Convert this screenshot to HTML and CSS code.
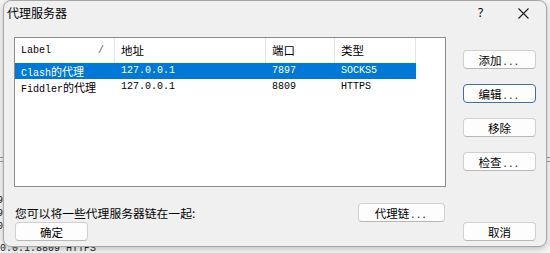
FILE: index.html
```html
<!DOCTYPE html>
<html lang="zh-CN">
<head>
    <meta charset="UTF-8">
    <meta name="viewport" content="width=device-width, initial-scale=1.0">
    <title>代理服务器</title>
    <link rel="stylesheet" href="styles.css">
</head>
<body>
    <div class="desktop">
        <!-- the window behind the dialog, only its edges show -->
        <div class="behind-rule"></div>
        <div class="behind-left">9<br>9<br>0</div>
        <div class="behind-bottom">0.0.1.8809 HTTPS</div>

        <div class="dialog">
            <div class="titlebar">
                <span class="title">代理服务器</span>
                <span class="tb-help">?</span>
                <span class="tb-close">
                    <svg width="11" height="11" viewBox="0 0 11 11">
                        <path d="M0.5 0.5 L10.5 10.5 M10.5 0.5 L0.5 10.5" stroke="#1b1b1b" stroke-width="1.1" fill="none"/>
                    </svg>
                </span>
            </div>

            <div class="dialog-body">
                <div class="listview">
                    <div class="lv-header">
                        <div class="lv-col lv-col-label"><span>Label</span><span class="sort">/</span></div>
                        <div class="lv-col">地址</div>
                        <div class="lv-col">端口</div>
                        <div class="lv-col">类型</div>
                    </div>
                    <div class="lv-row selected">
                        <div class="lv-cell">Clash<span class="cjk">的代理</span></div>
                        <div class="lv-cell">127.0.0.1</div>
                        <div class="lv-cell">7897</div>
                        <div class="lv-cell">SOCKS5</div>
                    </div>
                    <div class="lv-row">
                        <div class="lv-cell">Fiddler<span class="cjk">的代理</span></div>
                        <div class="lv-cell">127.0.0.1</div>
                        <div class="lv-cell">8809</div>
                        <div class="lv-cell">HTTPS</div>
                    </div>
                </div>

                <div class="side-buttons">
                    <button class="btn">添加<span class="dots">...</span></button>
                    <button class="btn btn-default">编辑<span class="dots">...</span></button>
                    <button class="btn">移除</button>
                    <button class="btn">检查<span class="dots">...</span></button>
                </div>

                <div class="chain-row">
                    <span class="hint">您可以将一些代理服务器链在一起:</span>
                    <button class="btn btn-chain">代理链<span class="dots">...</span></button>
                </div>

                <div class="footer">
                    <button class="btn btn-ok">确定</button>
                    <button class="btn">取消</button>
                </div>
            </div>
        </div>
    </div>
</body>
</html>
```

FILE: styles.css
```css
body {
    margin: 0;
    background: #f0f0f0;
    font-family: "Noto Sans CJK SC", "Noto Sans", sans-serif;
    overflow: hidden;
}
.desktop {
    position: relative;
    width: 550px;
    height: 253px;
    background: #f4f4f4;
    overflow: hidden;
}

/* behind window */
.behind-rule {
    position: absolute;
    left: 0;
    top: 157px;
    width: 550px;
    height: 3px;
    border-top: 1px solid #9a9a9a;
    border-bottom: 1px solid #9a9a9a;
}
.behind-left {
    position: absolute;
    left: -3px;
    top: 194px;
    font-family: "Liberation Mono", monospace;
    font-size: 10px;
    line-height: 13px;
    color: #222;
}
.behind-bottom {
    position: absolute;
    left: 0;
    top: 243px;
    font-family: "Liberation Mono", monospace;
    font-size: 10px;
    line-height: 12px;
    color: #222;
}

/* dialog */
.dialog {
    position: absolute;
    left: 3px;
    top: 0;
    width: 544px;
    height: 247px;
    box-sizing: border-box;
    background: #f0f0f0;
    border: 1px solid #a6a6a6;
    border-radius: 8px;
    box-shadow: 0 2px 6px rgba(0,0,0,0.22);
    display: flex;
    flex-direction: column;
}
.titlebar {
    height: 28px;
    display: flex;
    align-items: flex-start;
    padding: 3px 0 0 3px;
    box-sizing: border-box;
    font-size: 12px;
    line-height: 18px;
    color: #000;
}
.tb-help {
    margin-left: auto;
    width: 8px;
    font-family: "Noto Sans", sans-serif;
    font-size: 12px;
}
.tb-close {
    margin: 4px 17px 0 32px;
    display: flex;
}

.dialog-body {
    display: grid;
    grid-template-columns: 432px 73px;
    column-gap: 17px;
    padding: 8px 10px 0 10px;
}

/* list view */
.listview {
    height: 150px;
    box-sizing: border-box;
    background: #fff;
    border: 1px solid #8c8c8c;
}
.lv-header, .lv-row {
    display: grid;
    grid-template-columns: 100px 151px 69px 81px;
    width: 401px;
}
.lv-header {
    height: 25px;
}
.lv-col {
    padding-left: 6px;
    border-right: 1px solid #e5e5e5;
    font-size: 11.5px;
    line-height: 25px;
    color: #000;
}
.lv-col-label {
    display: flex;
    justify-content: space-between;
    padding-right: 10px;
    font-family: "Liberation Mono", monospace;
    font-size: 10px;
}
.sort {
    color: #555;
}
.lv-row {
    height: 16px;
    font-family: "Liberation Mono", "Noto Sans CJK SC", monospace;
    font-size: 10px;
    line-height: 16px;
    color: #000;
}
.lv-row.selected {
    background: #0078d7;
    color: #fff;
}
.lv-cell {
    padding-left: 6px;
    white-space: nowrap;
}
.cjk {
    font-family: "Noto Sans CJK SC", sans-serif;
    font-size: 11px;
}

/* buttons */
.btn {
    height: 19px;
    padding: 0;
    box-sizing: border-box;
    background: #fdfdfd;
    border: 1px solid #d0d0d0;
    border-bottom-color: #b8b8b8;
    border-radius: 4px;
    font-family: "Noto Sans CJK SC", sans-serif;
    font-size: 11.5px;
    line-height: 16px;
    color: #000;
    width: 73px;
}
.dots {
    letter-spacing: 2.5px;
    margin-left: 2px;
    color: #333;
}
.btn-default {
    border-color: #3d6fa3;
}
.side-buttons {
    display: flex;
    flex-direction: column;
    gap: 15px;
    padding-top: 13px;
}
.chain-row {
    grid-column: 1;
    display: flex;
    justify-content: space-between;
    align-items: center;
    margin-top: 16px;
}
.hint {
    font-size: 11.8px;
    color: #000;
    padding-left: 1px;
}
.btn-chain {
    width: 87px;
    margin-right: 1px;
}
.footer {
    grid-column: 1 / -1;
    display: flex;
    justify-content: space-between;
}
.btn-ok {
    margin-left: 1px;
}
```
